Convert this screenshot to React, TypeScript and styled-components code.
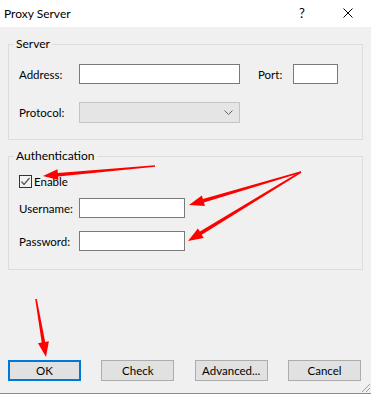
import styled, { createGlobalStyle } from "styled-components";

const GlobalStyle = createGlobalStyle`
  html, body {
    margin: 0;
    padding: 0;
    background: #f0f0f0;
  }
  * {
    box-sizing: border-box;
  }
`;

const Dialog = styled.div`
  position: relative;
  width: 371px;
  height: 394px;
  display: flex;
  flex-direction: column;
  background: #f0f0f0;
  border-bottom: 1px solid #8a8a8a;
  font-family: "Segoe UI", Lato, "Liberation Sans", sans-serif;
  font-size: 11.5px;
  color: #000;
  overflow: hidden;
`;

const TitleBar = styled.div`
  height: 27px;
  background: #fff;
  display: flex;
  align-items: center;
  padding: 0 0 1px 4px;
`;

const Title = styled.span`
  flex: 1;
  font-size: 12px;
`;

const TitleButton = styled.span`
  width: 46px;
  display: flex;
  justify-content: center;
  align-items: center;
  font-size: 13px;
`;

const Body = styled.div`
  flex: 1;
  display: flex;
  flex-direction: column;
  gap: 9px;
  padding: 10px 8px 0 8px;
`;

const Group = styled.fieldset<{ $bottom: number; $top: number }>`
  margin: 0;
  width: 355px;
  border: 1px solid #dcdcdc;
  padding: ${(p) => p.$top}px 10px ${(p) => p.$bottom}px 10px;
  display: flex;
  flex-direction: column;

  legend {
    margin-left: -5px;
    padding: 0 2px;
    line-height: 14px;
    font-size: 12px;
  }
`;

const Row = styled.div<{ $gap?: number }>`
  display: flex;
  align-items: center;
  margin-top: ${(p) => p.$gap ?? 0}px;
`;

const Label = styled.label<{ $width?: number; $indent?: number }>`
  width: ${(p) => p.$width ?? 60}px;
  margin-left: ${(p) => p.$indent ?? 0}px;
  flex: none;
`;

const TextBox = styled.input<{ $width: number }>`
  width: ${(p) => p.$width}px;
  height: 20px;
  border: 1px solid #7a7a7a;
  background: #fff;
  padding: 0 3px;
  margin: 0;
  font: inherit;
  outline: none;
`;

const ComboBox = styled.div`
  width: 161px;
  height: 21px;
  border: 1px solid #c4c4c4;
  background: #e5e5e5;
  display: flex;
  justify-content: flex-end;
  align-items: center;
  padding-right: 6px;
`;

const CheckRow = styled.label`
  display: flex;
  align-items: center;
  gap: 2px;
  height: 14px;
`;

const CheckBox = styled.span`
  width: 13px;
  height: 13px;
  border: 1px solid #333;
  background: #f4f4f4;
  display: flex;
  align-items: center;
  justify-content: center;
`;

const ButtonBar = styled.div`
  margin-top: auto;
  display: flex;
  justify-content: space-between;
  padding: 0 10px 12px 8px;
`;

const Button = styled.button<{ $default?: boolean }>`
  width: 73px;
  height: 21px;
  margin: 0;
  padding: 0;
  font: inherit;
  color: #000;
  background: #e1e1e1;
  border: ${(p) => (p.$default ? "2px solid #0078d7" : "1px solid #adadad")};
`;

const Overlay = styled.svg`
  position: absolute;
  left: 0;
  top: 0;
  pointer-events: none;
`;

const Grip = styled.svg`
  position: absolute;
  right: 0;
  bottom: 0;
`;

type Pt = [number, number];

function arrowPoints(tail: Pt, tip: Pt): string {
  const [x1, y1] = tail;
  const [x2, y2] = tip;
  const dx = x2 - x1;
  const dy = y2 - y1;
  const len = Math.hypot(dx, dy);
  const ux = dx / len;
  const uy = dy / len;
  const nx = -uy;
  const ny = ux;
  const headLen = 15;
  const headHalf = 5.5;
  const tailHalf = 0.8;
  const neckHalf = 1.8;
  const bx = x2 - ux * headLen;
  const by = y2 - uy * headLen;
  const pts: Pt[] = [
    [x1 + nx * tailHalf, y1 + ny * tailHalf],
    [bx + nx * neckHalf, by + ny * neckHalf],
    [bx + nx * headHalf, by + ny * headHalf],
    [x2, y2],
    [bx - nx * headHalf, by - ny * headHalf],
    [bx - nx * neckHalf, by - ny * neckHalf],
    [x1 - nx * tailHalf, y1 - ny * tailHalf],
  ];
  return pts.map((p) => `${p[0].toFixed(1)},${p[1].toFixed(1)}`).join(" ");
}

const arrows: [Pt, Pt][] = [
  [[155, 166], [43, 176]],
  [[301, 172], [189, 205]],
  [[301, 172], [188, 241]],
  [[36, 299], [46, 357]],
];

export default function App() {
  return (
    <>
      <GlobalStyle />
      <Dialog>
        <TitleBar>
          <Title>Proxy Server</Title>
          <TitleButton>?</TitleButton>
          <TitleButton>
            <svg width="10" height="10" viewBox="0 0 10 10">
              <path d="M0.5 0.5 L9.5 9.5 M9.5 0.5 L0.5 9.5" stroke="#000" strokeWidth="1" />
            </svg>
          </TitleButton>
        </TitleBar>
        <Body>
          <Group $top={13} $bottom={16}>
            <legend>Server</legend>
            <Row>
              <Label>Address:</Label>
              <TextBox $width={161} />
              <Label $width={35} $indent={18}>
                Port:
              </Label>
              <TextBox $width={45} />
            </Row>
            <Row $gap={18}>
              <Label>Protocol:</Label>
              <ComboBox>
                <svg width="9" height="5" viewBox="0 0 9 5">
                  <path d="M0.5 0.5 L4.5 4.5 L8.5 0.5" fill="none" stroke="#606060" strokeWidth="1" />
                </svg>
              </ComboBox>
            </Row>
          </Group>
          <Group $top={11} $bottom={18}>
            <legend>Authentication</legend>
            <CheckRow>
              <CheckBox>
                <svg width="11" height="11" viewBox="0 0 11 11">
                  <path d="M1.5 5.5 L4 8.5 L9.5 2" fill="none" stroke="#555" strokeWidth="1.2" />
                </svg>
              </CheckBox>
              Enable
            </CheckRow>
            <Row $gap={10}>
              <Label>Username:</Label>
              <TextBox $width={106} />
            </Row>
            <Row $gap={13}>
              <Label>Password:</Label>
              <TextBox $width={106} type="password" />
            </Row>
          </Group>
        </Body>
        <ButtonBar>
          <Button $default>OK</Button>
          <Button>Check</Button>
          <Button>Advanced...</Button>
          <Button>Cancel</Button>
        </ButtonBar>
        <Grip width="12" height="12" viewBox="0 0 12 12">
          <path d="M11 3 L3 11 M11 7 L7 11" stroke="#a0a0a0" strokeWidth="1" />
        </Grip>
        <Overlay width="371" height="394" viewBox="0 0 371 394">
          {arrows.map(([a, b], i) => (
            <polygon key={i} points={arrowPoints(a, b)} fill="#f00" />
          ))}
        </Overlay>
      </Dialog>
    </>
  );
}
